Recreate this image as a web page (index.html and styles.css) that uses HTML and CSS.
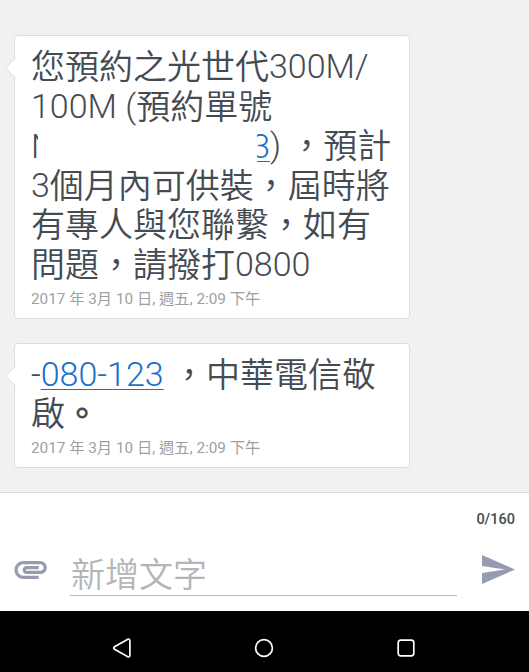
FILE: index.html
```html
<!DOCTYPE html>
<html lang="zh-Hant">
<head>
    <meta charset="UTF-8">
    <meta name="viewport" content="width=device-width, initial-scale=1.0">
    <title>訊息</title>
    <link rel="stylesheet" href="styles.css">
</head>
<body>
    <main class="messages">
        <div class="bubble">
            <svg class="tail" width="11" height="22" viewBox="0 0 11 22">
                <path d="M11 0.5L0.8 11L11 21.5" fill="#fff" stroke="#dcdedd"/>
            </svg>
            <p class="text">
                您預約之光世代<span class="num">300M/</span><br>
                <span class="num">100M (</span>預約單號<br>
                <span class="num hidden-start">N</span><span class="num hidden-end"><a href="#">3</a></span><span class="num">) </span>，預計<br>
                <span class="num">3</span>個月內可供裝，屆時將<br>
                有專人與您聯繫，如有<br>
                問題，請撥打<span class="num">0800</span>
            </p>
            <p class="time">2017 年 3月 10 日, 週五, 2:09 下午</p>
        </div>
        <div class="bubble">
            <svg class="tail" width="11" height="22" viewBox="0 0 11 22">
                <path d="M11 0.5L0.8 11L11 21.5" fill="#fff" stroke="#dcdedd"/>
            </svg>
            <p class="text">
                <span class="num">-<a href="#">080-123</a> </span>，中華電信敬<br>
                啟<span class="stop">。</span>
            </p>
            <p class="time">2017 年 3月 10 日, 週五, 2:09 下午</p>
        </div>
    </main>

    <footer class="compose">
        <div class="counter">0/160</div>
        <div class="compose-row">
            <svg class="clip" width="33" height="18" viewBox="1.7 7 20.4 11" preserveAspectRatio="none">
                <path d="M2 12.5C2 9.46 4.46 7 7.5 7H18c2.21 0 4 1.79 4 4s-1.79 4-4 4H9.5C8.12 15 7 13.88 7 12.5S8.12 10 9.5 10H17v2H9.41c-.55 0-.55 1 0 1H18c1.1 0 2-.9 2-2s-.9-2-2-2H7.5C5.57 9 4 10.57 4 12.5S5.57 16 7.5 16H17v2H7.5C4.46 18 2 15.54 2 12.5z" fill="#969bb0"/>
            </svg>
            <div class="field">新增文字</div>
            <svg class="send" width="33" height="29" viewBox="0 0 33 29">
                <path d="M0 0L33 14.5L0 29V18L23 14.5L0 11Z" fill="#969bb0"/>
            </svg>
        </div>
    </footer>

    <nav class="navbar">
        <svg width="20" height="20" viewBox="0 0 20 20">
            <path d="M15.4 1.4L2.6 8.7Q0.8 10 2.6 11.3L15.4 18.6Q17.9 19.5 17.9 17V3Q17.9 0.5 15.4 1.4Z"/>
        </svg>
        <svg width="20" height="20" viewBox="0 0 20 20">
            <circle cx="10" cy="10" r="8.4"/>
        </svg>
        <svg width="20" height="20" viewBox="0 0 20 20">
            <rect x="2.2" y="2.2" width="15.6" height="15.6" rx="2.5"/>
        </svg>
    </nav>
</body>
</html>
```
FILE: styles.css
```css
* {
    box-sizing: border-box;
}
body {
    margin: 0;
    height: 672px;
    display: flex;
    flex-direction: column;
    background-color: #f0f2f1;
    font-family: Roboto, "Noto Sans CJK TC", sans-serif;
    overflow: hidden;
}
p {
    margin: 0;
}

/* messages */
.messages {
    height: 492px;
    padding: 35px 0 0 14px;
    display: flex;
    flex-direction: column;
    gap: 24px;
}
.bubble {
    position: relative;
    width: 396px;
    padding: 12px 0 9px 16px;
    background-color: #fff;
    border: 1px solid #dcdedd;
    border-radius: 4px;
}
.tail {
    position: absolute;
    left: -10px;
    top: 21px;
}
.text {
    font-size: 34px;
    font-weight: 350;
    line-height: 39.6px;
    color: #444b52;
    white-space: nowrap;
}
/* latin runs are thinner and sit slightly higher than the chinese */
.num {
    font-weight: 300;
    line-height: 1;
    vertical-align: 1px;
}
.text a {
    color: #1a6fc9;
    text-decoration: underline;
    text-decoration-thickness: 1px;
    text-underline-offset: 3px;
}
.stop {
    font-weight: 700;
}
.hidden-start,
.hidden-end {
    display: inline-flex;
    height: 39.6px;
    line-height: 39.6px;
    overflow: hidden;
    vertical-align: top;
}
.hidden-start {
    width: 7px;
    margin-right: 219px;
}
.hidden-end {
    width: 13px;
    justify-content: flex-end;
}
.time {
    margin-top: 3px;
    font-size: 15.3px;
    line-height: 20px;
    color: #9d9fa1;
    white-space: nowrap;
}

/* compose area */
.compose {
    height: 119px;
    border-top: 1px solid #dcdedd;
    background-color: #fff;
    padding: 18px 14px 0;
}
.counter {
    font-size: 14.5px;
    font-weight: 500;
    line-height: 18px;
    text-align: right;
    color: #444b52;
}
.compose-row {
    display: flex;
    align-items: flex-start;
    padding-top: 18px;
}
.clip {
    margin-top: 14px;
}
.field {
    width: 387px;
    height: 49px;
    margin-left: 23px;
    padding-left: 1px;
    border-bottom: 1px solid #e6ad70;
    font-size: 34px;
    font-weight: 350;
    line-height: 57px;
    color: #b4b5b7;
}
.send {
    margin: 8px 0 0 25px;
}

/* system buttons */
.navbar {
    height: 61px;
    display: flex;
    justify-content: center;
    gap: 122px;
    padding: 27px 2px 0 0;
    background-color: #000;
}
.navbar svg {
    fill: none;
    stroke: #fff;
    stroke-width: 1.7;
}
```
